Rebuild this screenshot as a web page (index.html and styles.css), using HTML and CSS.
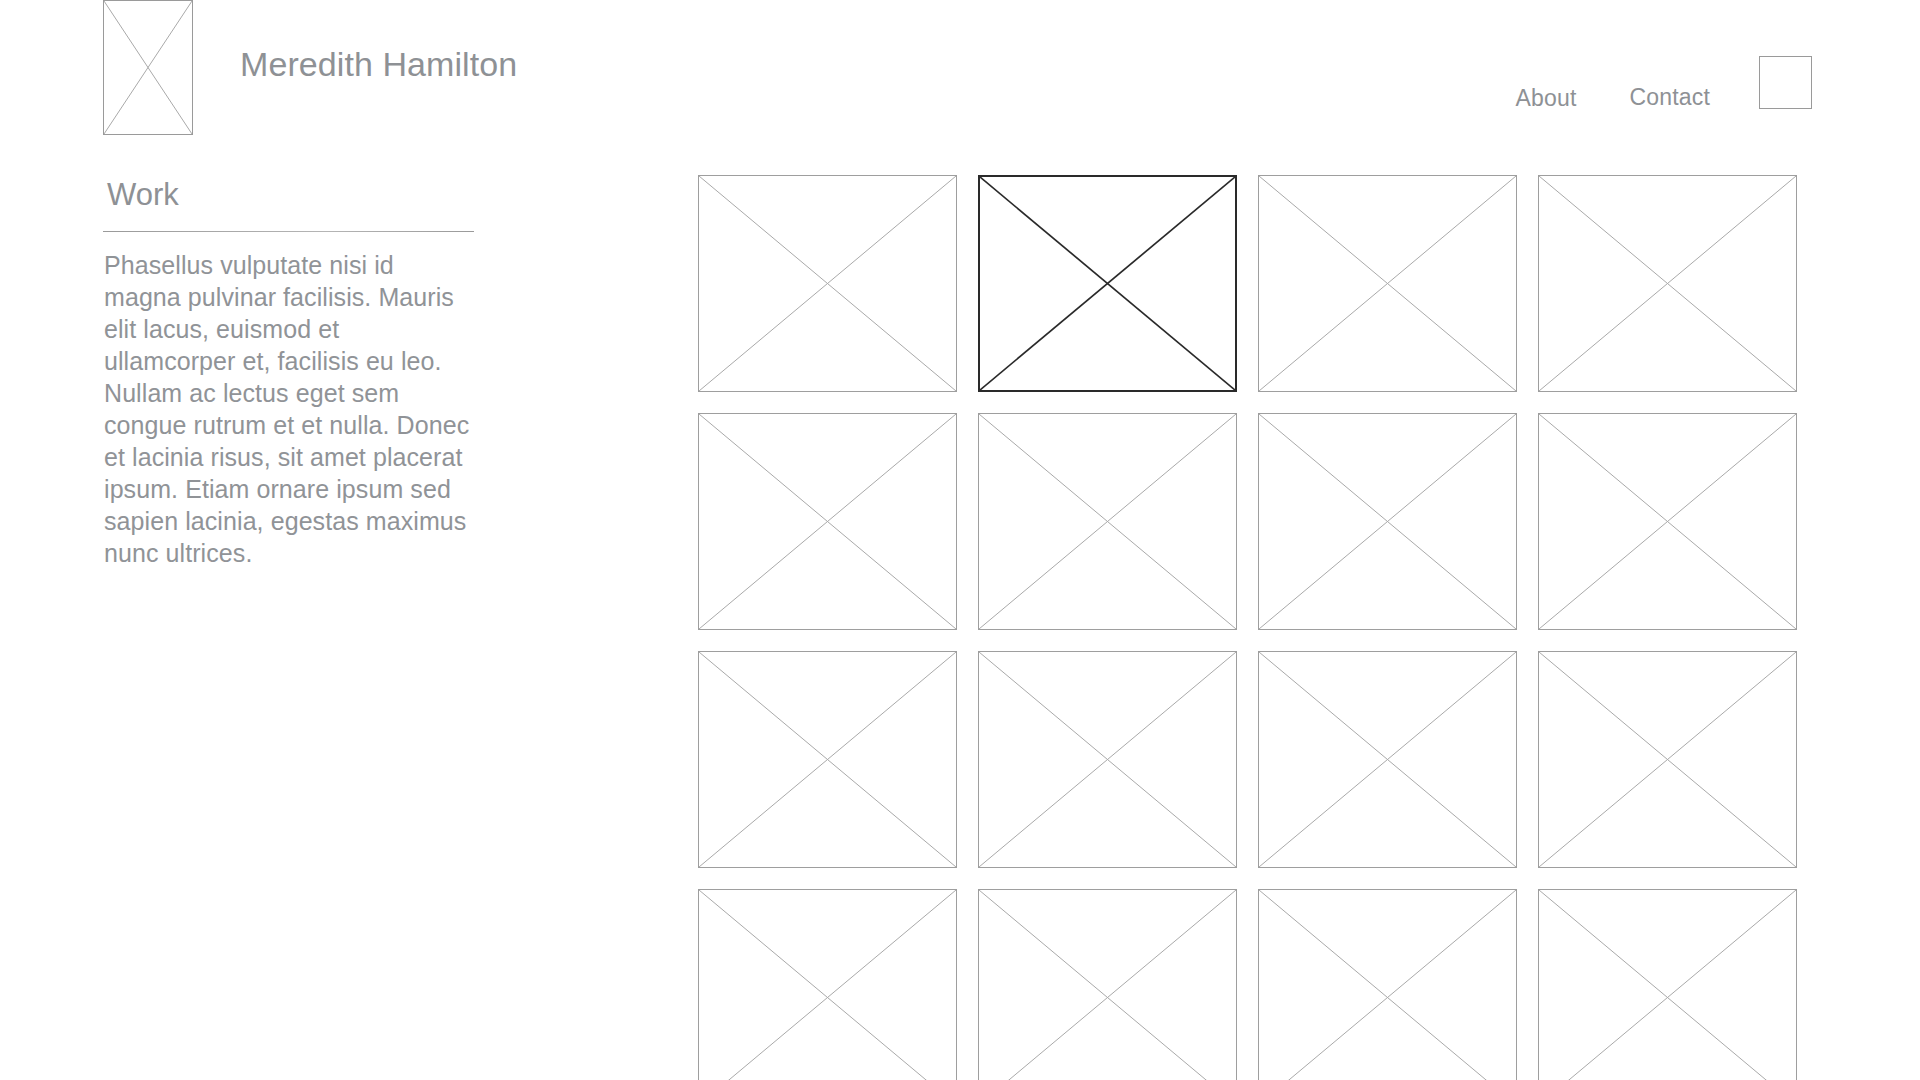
FILE: index.html
```html
<!DOCTYPE html>
<html lang="en">
<head>
<meta charset="utf-8">
<title>Meredith Hamilton — Work</title>
<link rel="stylesheet" href="styles.css">
</head>
<body>
<div class="page">
  <header class="header">
    <div class="logo">
      <svg class="xmark" width="100%" height="100%"><line x1="0" y1="0" x2="100%" y2="100%"/><line x1="100%" y1="0" x2="0" y2="100%"/></svg>
    </div>
    <h1 class="name">Meredith Hamilton</h1>
    <nav class="nav">
      <a class="nav-link nav-about">About</a>
      <a class="nav-link nav-contact">Contact</a>
      <div class="nav-box"></div>
    </nav>
  </header>
  <main class="main">
    <aside class="intro">
      <h2 class="intro-title">Work</h2>
      <hr class="rule">
      <p class="intro-text">Phasellus vulputate nisi id magna pulvinar facilisis. Mauris elit lacus, euismod et ullamcorper et, facilisis eu leo. Nullam ac lectus eget sem congue rutrum et et nulla. Donec et lacinia risus, sit amet placerat ipsum. Etiam ornare ipsum sed sapien lacinia, egestas maximus nunc ultrices.</p>
    </aside>
    <section class="grid">
      <div class="tile"><svg class="xmark" width="100%" height="100%"><line x1="0" y1="0" x2="100%" y2="100%"/><line x1="100%" y1="0" x2="0" y2="100%"/></svg></div>
      <div class="tile tile-active"><svg class="xmark" width="100%" height="100%"><line x1="0" y1="0" x2="100%" y2="100%"/><line x1="100%" y1="0" x2="0" y2="100%"/></svg></div>
      <div class="tile"><svg class="xmark" width="100%" height="100%"><line x1="0" y1="0" x2="100%" y2="100%"/><line x1="100%" y1="0" x2="0" y2="100%"/></svg></div>
      <div class="tile"><svg class="xmark" width="100%" height="100%"><line x1="0" y1="0" x2="100%" y2="100%"/><line x1="100%" y1="0" x2="0" y2="100%"/></svg></div>
      <div class="tile"><svg class="xmark" width="100%" height="100%"><line x1="0" y1="0" x2="100%" y2="100%"/><line x1="100%" y1="0" x2="0" y2="100%"/></svg></div>
      <div class="tile"><svg class="xmark" width="100%" height="100%"><line x1="0" y1="0" x2="100%" y2="100%"/><line x1="100%" y1="0" x2="0" y2="100%"/></svg></div>
      <div class="tile"><svg class="xmark" width="100%" height="100%"><line x1="0" y1="0" x2="100%" y2="100%"/><line x1="100%" y1="0" x2="0" y2="100%"/></svg></div>
      <div class="tile"><svg class="xmark" width="100%" height="100%"><line x1="0" y1="0" x2="100%" y2="100%"/><line x1="100%" y1="0" x2="0" y2="100%"/></svg></div>
      <div class="tile"><svg class="xmark" width="100%" height="100%"><line x1="0" y1="0" x2="100%" y2="100%"/><line x1="100%" y1="0" x2="0" y2="100%"/></svg></div>
      <div class="tile"><svg class="xmark" width="100%" height="100%"><line x1="0" y1="0" x2="100%" y2="100%"/><line x1="100%" y1="0" x2="0" y2="100%"/></svg></div>
      <div class="tile"><svg class="xmark" width="100%" height="100%"><line x1="0" y1="0" x2="100%" y2="100%"/><line x1="100%" y1="0" x2="0" y2="100%"/></svg></div>
      <div class="tile"><svg class="xmark" width="100%" height="100%"><line x1="0" y1="0" x2="100%" y2="100%"/><line x1="100%" y1="0" x2="0" y2="100%"/></svg></div>
      <div class="tile"><svg class="xmark" width="100%" height="100%"><line x1="0" y1="0" x2="100%" y2="100%"/><line x1="100%" y1="0" x2="0" y2="100%"/></svg></div>
      <div class="tile"><svg class="xmark" width="100%" height="100%"><line x1="0" y1="0" x2="100%" y2="100%"/><line x1="100%" y1="0" x2="0" y2="100%"/></svg></div>
      <div class="tile"><svg class="xmark" width="100%" height="100%"><line x1="0" y1="0" x2="100%" y2="100%"/><line x1="100%" y1="0" x2="0" y2="100%"/></svg></div>
      <div class="tile"><svg class="xmark" width="100%" height="100%"><line x1="0" y1="0" x2="100%" y2="100%"/><line x1="100%" y1="0" x2="0" y2="100%"/></svg></div>
    </section>
  </main>
</div>
</body>
</html>
```
FILE: styles.css
```css
html, body {
  margin: 0;
  padding: 0;
  background: #ffffff;
  overflow: hidden;
}

.page {
  height: 1080px;
  overflow: hidden;
  padding: 0 108px 0 103px;
  font-family: "Liberation Sans", Arial, Helvetica, sans-serif;
  color: #8e9195;
}

.header {
  display: flex;
  align-items: flex-start;
  height: 135px;
}

.logo {
  box-sizing: border-box;
  width: 90px;
  height: 135px;
  border: 1px solid #9a9a9a;
}

.xmark {
  display: block;
}

.xmark line {
  stroke: #a9a9a9;
  stroke-width: 1;
}

.name {
  margin: 44px 0 0 47px;
  font-size: 34px;
  line-height: 40px;
  letter-spacing: 0.08px;
  font-weight: normal;
  color: #8e9195;
}

.nav {
  margin: 56px 0 0 auto;
  display: flex;
  align-items: flex-start;
}

.nav-link {
  font-size: 23px;
  line-height: 26px;
  letter-spacing: 0.18px;
  color: #8e9195;
  text-decoration: none;
}

.nav-about {
  margin: 29px 53px 0 0;
}

.nav-contact {
  margin: 28px 49px 0 0;
}

.nav-box {
  box-sizing: border-box;
  width: 53px;
  height: 53px;
  border: 1px solid #9a9a9a;
}

.main {
  display: flex;
  align-items: flex-start;
  gap: 224px;
  padding-top: 40px;
}

.intro {
  width: 371px;
  flex: none;
}

.intro-title {
  margin: 3px 0 0 4px;
  font-size: 31px;
  line-height: 34px;
  font-weight: normal;
  color: #8e9195;
}

.rule {
  margin: 19px 0 0 0;
  border: 0;
  height: 1px;
  background: linear-gradient(to right, #9a9a9a, #b5b5b5 60%, #9a9a9a);
}

.intro-text {
  width: 369px;
  margin: 17px 0 0 1px;
  font-size: 25px;
  line-height: 32px;
  letter-spacing: 0.08px;
  color: #909397;
}

.grid {
  display: grid;
  grid-template-columns: repeat(4, 259px);
  grid-auto-rows: 217px;
  gap: 21px;
  flex: none;
}

.tile {
  box-sizing: border-box;
  border: 1px solid #9e9e9e;
  background: #ffffff;
}

.tile-active {
  border: 2px solid #2a2a2a;
}

.tile-active .xmark line {
  stroke: #2a2a2a;
  stroke-width: 1.7;
}
```
